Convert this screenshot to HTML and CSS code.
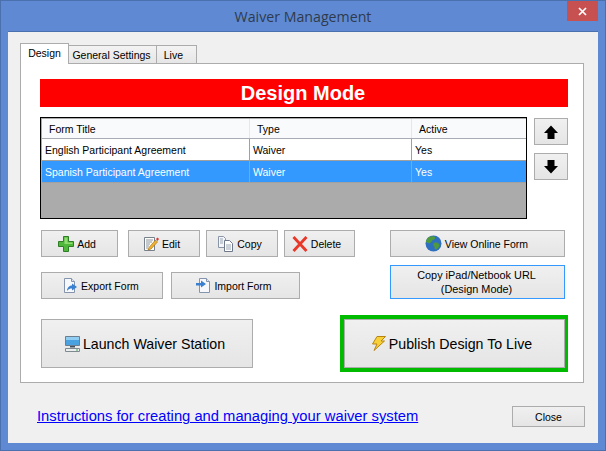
FILE: index.html
```html
<!DOCTYPE html>
<html lang="en">
<head>
<meta charset="utf-8">
<title>Waiver Management</title>
<link rel="stylesheet" href="styles.css">
</head>
<body>
<div class="window">
  <header class="titlebar">
    <span></span>
    <h1 class="title">Waiver Management</h1>
    <div class="close-x"><svg width="9" height="9" viewBox="0 0 9 9"><path d="M1 1l7 7M8 1l-7 7" stroke="#fff" stroke-width="1.7" fill="none"/></svg></div>
  </header>
  <main class="client">
    <nav class="tabs">
      <div class="tab active">Design</div>
      <div class="tab tab-general">General Settings</div>
      <div class="tab tab-live">Live</div>
    </nav>
    <section class="panel">
      <div class="banner">Design Mode</div>
      <div class="list-row">
        <div class="grid">
          <div class="grid-row head"><div class="cell">Form Title</div><div class="cell">Type</div><div class="cell">Active</div></div>
          <div class="grid-row"><div class="cell">English Participant Agreement</div><div class="cell">Waiver</div><div class="cell">Yes</div></div>
          <div class="grid-row selected"><div class="cell">Spanish Participant Agreement</div><div class="cell">Waiver</div><div class="cell">Yes</div></div>
        </div>
        <div class="movers">
          <button class="btn mover"><svg width="18" height="18" viewBox="0 0 18 18"><path d="M9 2.500L16 10H12.500V16H5.500V10H2Z" fill="#000"/></svg></button>
          <button class="btn mover"><svg width="18" height="18" viewBox="0 0 18 18"><path d="M5.500 2H12.500V8H16L9 15.500L2 8H5.500Z" fill="#000"/></svg></button>
        </div>
      </div>
      <div class="actions">
        <div class="actions-left">
          <div class="action-row top">
            <button class="btn add"><svg width="16" height="16" viewBox="0 0 16 16"><path d="M5.500 .5h5v5h5v5h-5v5h-5v-5h-5v-5h5z" fill="#4fb83a" stroke="#2f7d26"/><path d="M6.500 1.500h3v5h5v1.500h-8z" fill="#8fdc70"/></svg>Add</button>
            <button class="btn edit"><svg width="15" height="16" viewBox="0 0 15 16"><path d="M.5 1.500h10v13H.5z" fill="#fdfdf6" stroke="#77808c"/><path d="M2 4h7M2 6h6M2 8h4M2 10h3M2 12h2" stroke="#8a94a3"/><path d="M5 11.500L11.500 4l2 2L7 13l-3 1z" fill="#f0b030" stroke="#9a6a10" stroke-width=".6"/><path d="M12 3l1.500-1.500L15 3l-1.500 2z" fill="#e0352b"/></svg>Edit</button>
            <button class="btn copy"><svg width="16" height="16" viewBox="0 0 16 16"><path d="M.5 .5h5l2 2v9h-7z" fill="#f4f6fa" stroke="#8a95a8"/><path d="M6.500 4.500h5l3 3v8h-8z" fill="#fff" stroke="#6d788a"/><path d="M2 3h3M2 5h3M2 7h3M8 9h5M8 11h5M8 13h5" stroke="#9aa5b5"/></svg>Copy</button>
            <button class="btn delete"><svg width="16" height="16" viewBox="0 0 16 16"><path d="M1.500 1L14.500 15M14.500 1L1.500 15" stroke="#e8382a" stroke-width="2.800" fill="none"/></svg>Delete</button>
          </div>
          <div class="action-row bottom">
            <button class="btn export"><svg width="15" height="16" viewBox="0 0 15 16"><path d="M1.500 .5h7l3 3v11h-10z" fill="#f6f8fc" stroke="#8494ad"/><path d="M8.500 .5v3h3" fill="#dfe7f2" stroke="#8494ad"/><path d="M4 13c0-3 2-5.500 5-5.500V5.500l5 3.500-5 3.500v-2c-2 0-3.500.5-5 2.500z" fill="#3a7fd0"/></svg>Export Form</button>
            <button class="btn import"><svg width="16" height="16" viewBox="0 0 16 16"><path d="M4.500 .5h7l3 3v11h-10z" fill="#f6f8fc" stroke="#8494ad"/><path d="M11.500 .5v3h3" fill="#dfe7f2" stroke="#8494ad"/><path d="M1 5h5V2.500L11 6 6 9.500V7.500H1z" fill="#3a7fd0"/></svg>Import Form</button>
          </div>
        </div>
        <div class="actions-right">
          <button class="btn online"><svg width="17" height="17" viewBox="0 0 17 17"><circle cx="8.500" cy="8.500" r="8" fill="#2f6fc0"/><path d="M4 2c2-1 5-1 6 0s-1 3-2 3-1 2-3 3-3-1-4-1c0-2 1-4 3-5zM9 8c2-1 4 0 5 1s0 3-1 4-2 2-3 1 0-2-1-3-1-2 0-3z" fill="#4f9a3c"/></svg>View Online Form</button>
          <button class="btn url">Copy iPad/Netbook URL<br>(Design Mode)</button>
        </div>
      </div>
      <div class="big-row">
        <button class="btn big launch"><svg width="15" height="16" viewBox="0 0 15 16"><path d="M.5 .5h14v9H.5z" fill="#4aa3e0" stroke="#6b7f90"/><path d="M1 1h13v3H1z" fill="#8fcdf2"/><path d="M5 10h5v1.500H5z" fill="#44505c"/><path d="M.5 12.500h14v3H.5z" fill="#e9eef0" stroke="#7f8a90"/><path d="M11 14h2" stroke="#47a347"/></svg>Launch Waiver Station</button>
        <div class="publish-frame">
          <button class="btn big publish"><svg width="14" height="15" viewBox="0 0 14 15"><path d="M5 .5h8.500L9 5h3.500L2 14.500 5 8H.5z" fill="#f8d038" stroke="#b78412"/></svg>Publish Design To Live</button>
        </div>
      </div>
    </section>
    <footer class="footer">
      <a class="help" href="#">Instructions for creating and managing your waiver system</a>
      <button class="btn closebtn">Close</button>
    </footer>
  </main>
</div>
</body>
</html>
```

FILE: styles.css
```css
* { box-sizing: border-box; }
html, body { margin: 0; padding: 0; }
body { width: 606px; height: 451px; overflow: hidden; font-family: "Liberation Sans", Arial, sans-serif; font-size: 10.5px; color: #000; }

.window { width: 606px; height: 451px; background: #5f8ad3; border: 1px solid #4a70ae; display: flex; flex-direction: column; padding: 0 7px 7px; }

.titlebar { height: 30px; display: grid; grid-template-columns: 1fr auto 1fr; align-items: start; flex: none; }
.title { margin: 6px 0 0; font-family: "Open Sans", sans-serif; font-weight: 400; font-size: 14.2px; line-height: 19px; color: #2f3a4d; }
.close-x { justify-self: end; width: 31px; height: 20px; background: #c75050; display: flex; align-items: center; justify-content: center; }

.client { flex: 1; background: #f0f0f0; border-top: 1px solid #4a70ae; padding: 11px 14px 0 12px; display: flex; flex-direction: column; }

.tabs { display: flex; align-items: flex-end; height: 20px; position: relative; z-index: 1; }
.tab { height: 18px; line-height: 18px; border: 1px solid #acacac; border-bottom: 0; border-left: 0; background: linear-gradient(#f3f3f3, #e6e6e6); text-align: center; }
.tab.active { height: 21px; width: 49px; background: #fff; border-left: 1px solid #acacac; margin-bottom: -1px; line-height: 19px; padding-bottom: 2px; }
.tab-general { width: 88px; padding-right: 2px; }
.tab-live { width: 40px; text-align: right; padding-right: 13px; }

.panel { height: 320px; background: #fff; border: 1px solid #acacac; padding: 15px 15px 0 19px; flex: none; }
.banner { height: 28px; background: #f00; color: #fff; font-weight: 700; font-size: 20px; line-height: 28px; text-align: center; padding-right: 2px; }

.list-row { display: flex; margin-top: 10px; gap: 7px; }
.grid { width: 487px; height: 102px; background: #ababab; border: 1px solid #000; padding: 1px 0 0 1px; }
.grid-row { display: grid; grid-template-columns: 208px 162px 1fr; height: 22px; border-bottom: 1px solid #a0a0a0; background: #fff; line-height: 23px; }
.grid-row.head { height: 20px; background: #f8fafc; border-bottom: 1px solid #a8adb3; line-height: 21px; }
.grid-row.head .cell { padding-left: 7px; border-right-color: #e3e8ee; }
.cell { padding-left: 3px; border-right: 1px solid #a0a0a0; white-space: nowrap; overflow: hidden; }
.cell:last-child { border-right: 0; }
.grid-row.selected { background: #3399ff; color: #fff; }

.movers { display: flex; flex-direction: column; gap: 8px; margin-top: 1px; }
.btn { font: inherit; color: #000; border: 1px solid #acacac; background: linear-gradient(#f0f0f0, #e5e5e5); padding: 0 4px 0 0; display: flex; align-items: center; justify-content: center; gap: 3px; line-height: 14px; }
.mover { width: 34px; height: 27px; padding: 0; }

.actions { display: flex; justify-content: space-between; margin: 11px 3px 0 1px; height: 69px; }
.actions-left { display: flex; flex-direction: column; gap: 15px; }
.action-row { display: flex; height: 27px; }
.add { width: 77px; padding-right: 5px; }
.edit { width: 72px; margin-left: 10px; }
.copy { width: 72px; margin-left: 6px; }
.delete { width: 71px; margin-left: 6px; padding-right: 6px; }
.export { width: 122px; padding-right: 2px; }
.import { width: 129px; margin-left: 8px; }
.actions-right { display: flex; flex-direction: column; gap: 8px; width: 175px; }
.online { height: 27px; padding-right: 2px; }
.url { height: 34px; border-color: #3399ff; flex-direction: column; gap: 0; font-size: 10.9px; padding: 0 2px 0 0; }

.big-row { display: flex; justify-content: space-between; align-items: center; margin-top: 16px; }
.big { font-size: 14.2px; height: 49px; gap: 3px; }
.launch { width: 212px; margin-left: 1px; }
.publish-frame { border: solid #00bb00; border-width: 4px 3px 4px 4px; }
.publish { width: 221px; padding-right: 5px; }

.footer { flex: 1; display: flex; align-items: flex-start; justify-content: space-between; padding: 23px 0 0 17px; }
.help { color: #0000ff; font-size: 14.75px; line-height: 18px; margin-top: 1px; }
.closebtn { width: 73px; height: 21px; margin-right: -1px; padding: 0; }
```
